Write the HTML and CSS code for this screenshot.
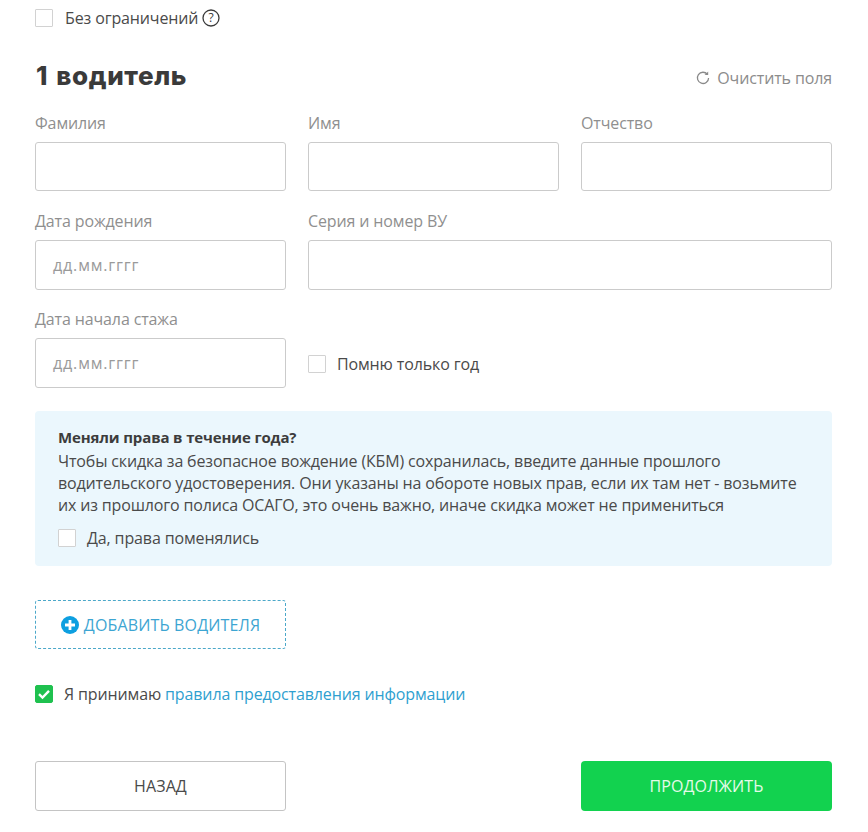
FILE: index.html
```html
<!DOCTYPE html>
<html lang="ru">
<head>
<meta charset="utf-8">
<title>1 водитель</title>
<link rel="stylesheet" href="styles.css">
</head>
<body>
<main class="page">
  <div class="check-row top-check">
    <span class="box"></span>
    <span class="check-text">Без ограничений</span>
    <svg class="help" viewBox="0 0 18 18" width="18" height="18"><circle cx="9" cy="9" r="8" fill="none" stroke="#3a3a3a" stroke-width="1.3"/><text x="9" y="13" text-anchor="middle" class="help-q">?</text></svg>
  </div>
  <div class="head">
    <h2>1 водитель</h2>
    <a class="clear">
      <svg viewBox="0 0 14 14" width="14" height="14"><path d="M11.4 3.4A5.6 5.6 0 1 0 12.6 7" fill="none" stroke="#8a8a8a" stroke-width="1.3"/><path d="M8.6 3.9h3.6V.4z" fill="#8a8a8a"/></svg>
      Очистить поля
    </a>
  </div>
  <div class="grid">
    <div class="field"><label>Фамилия</label><div class="input h49"></div></div>
    <div class="field"><label>Имя</label><div class="input h49"></div></div>
    <div class="field"><label>Отчество</label><div class="input h49"></div></div>
    <div class="field"><label>Дата рождения</label><div class="input">дд.мм.гггг</div></div>
    <div class="field wide"><label>Серия и номер ВУ</label><div class="input"></div></div>
    <div class="field"><label>Дата начала стажа</label><div class="input">дд.мм.гггг</div></div>
    <div class="check-row year"><span class="box"></span><span class="check-text">Помню только год</span></div>
  </div>
  <section class="notice">
    <strong>Меняли права в течение года?</strong>
    <p>Чтобы скидка за безопасное вождение (КБМ) сохранилась, введите данные прошлого водительского удостоверения. Они указаны на обороте новых прав, если их там нет - возьмите их из прошлого полиса ОСАГО, это очень важно, иначе скидка может не примениться</p>
    <div class="check-row notice-check"><span class="box"></span><span class="check-text">Да, права поменялись</span></div>
  </section>
  <button class="add" type="button">
    <svg viewBox="0 0 18 18" width="18" height="18"><circle cx="9" cy="9" r="9" fill="#0d9fe0"/><path d="M9 4v10M4 9h10" stroke="#fff" stroke-width="2.8"/></svg>
    ДОБАВИТЬ ВОДИТЕЛЯ
  </button>
  <div class="check-row accept">
    <span class="box on"><svg viewBox="0 0 18 18" width="18" height="18"><path d="M4 9.2l3.5 3.3 6.5-6.6" fill="none" stroke="#fff" stroke-width="2.4"/></svg></span>
    <span class="check-text">Я принимаю <a class="link">правила предоставления информации</a></span>
  </div>
  <div class="actions">
    <button class="btn back" type="button">НАЗАД</button>
    <span></span>
    <button class="btn next" type="button">ПРОДОЛЖИТЬ</button>
  </div>
</main>
</body>
</html>
```
FILE: styles.css
```css
* { box-sizing: border-box; }
html, body { margin: 0; background: #fff; }
body { font-family: "Open Sans", "Liberation Sans", sans-serif; font-size: 16px; letter-spacing: -0.13px; color: #3c3c3c; }
.page { width: 868px; height: 832px; overflow: hidden; padding: 9px 36px 0 35px; }
.check-row { display: flex; align-items: center; }
.box { width: 18px; height: 18px; flex: none; border: 1px solid #d2d2d2; border-radius: 1px; background: #fff; display: block; }
.box.on { background: #1fc14f; border-color: #1fc14f; border-radius: 2px; position: relative; }
.box.on svg { position: absolute; left: -1px; top: -1px; }
.check-text { line-height: 18px; color: #4a4a4a; }
.top-check { height: 18px; }
.top-check .check-text { margin-left: 12px; }
.help { margin-left: 4px; }
.help-q { font-size: 12px; font-family: "Open Sans", sans-serif; fill: #3a3a3a; }
.head { display: flex; justify-content: space-between; align-items: center; margin-top: 30px; height: 38px; }
h2 { margin: 0; font-family: Inter, "Liberation Sans", sans-serif; font-weight: 800; font-size: 26px; letter-spacing: 0.6px; word-spacing: 2px; color: #3a3a3a; line-height: 38px; padding-left: 1px; }
.clear { display: flex; align-items: center; gap: 7px; color: #8c8c8c; font-size: 16px; line-height: 22px; padding-top: 3px; }
.grid { display: grid; grid-template-columns: repeat(3, 251px); column-gap: 22px; margin-top: 17px; }
.field { display: flex; flex-direction: column; }
.field.wide { grid-column: span 2; }
label { color: #8f8f8f; line-height: 22px; height: 22px; margin-bottom: 8px; }
.input { height: 50px; border: 1px solid #cbcbcb; border-radius: 3px; padding-left: 17px; display: flex; align-items: center; color: #9a9a9a; letter-spacing: 0.85px; background: #fff; margin-bottom: 18px; }
.input.h49 { height: 49px; margin-bottom: 19px; }
.year { grid-column: span 2; padding-top: 14px; }
.year .check-text { margin-left: 11px; }
.notice { background: #ebf7fd; border-radius: 4px; height: 155px; padding: 15px 23px 0; margin-top: 5px; line-height: 22px; color: #4a4a4a; }
.notice strong { display: block; font-weight: 700; font-size: 15px; letter-spacing: -0.14px; color: #3c3c3c; }
.notice p { margin: 2px 0 0; letter-spacing: -0.155px; }
.notice-check { margin-top: 13px; }
.notice-check .check-text { margin-left: 11px; }
.add { display: flex; align-items: center; justify-content: center; gap: 5px; width: 251px; height: 49px; margin-top: 34px; background: #fff; border: 1px dashed #4ba8c9; border-radius: 3px; color: #3da5d2; font: inherit; letter-spacing: 0.15px; padding: 0; }
.accept { margin-top: 36px; }
.accept .check-text { margin-left: 11px; }
.link { color: #2f9fd0; }
.actions { display: grid; grid-template-columns: repeat(3, 251px); column-gap: 22px; margin-top: 58px; }
.btn { height: 50px; border-radius: 3px; font: inherit; letter-spacing: 0.1px; padding: 0; }
.back { background: #fff; border: 1px solid #c4c4c4; color: #4a4a4a; }
.next { background: #12d24f; border: none; border-radius: 4px; color: #e5fbe9; }
```
